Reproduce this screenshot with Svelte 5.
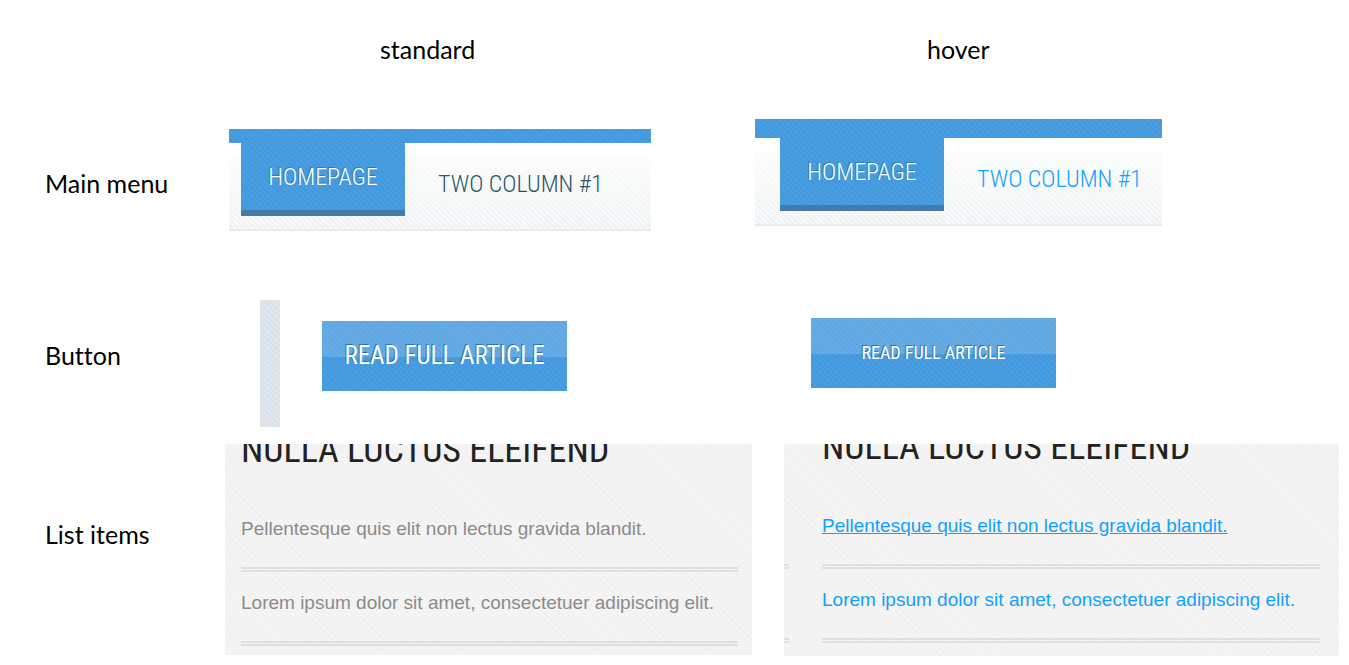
<script>
  const states = [
    { name: 'standard', hover: false },
    { name: 'hover', hover: true }
  ];
  const items = [
    'Pellentesque quis elit non lectus gravida blandit.',
    'Lorem ipsum dolor sit amet, consectetuer adipiscing elit.'
  ];
</script>

<main class="sheet">
  <span></span>
  {#each states as state}
    <h2 class="state" class:hover={state.hover}>{state.name}</h2>
  {/each}

  <h3 class="label">Main menu</h3>
  {#each states as state}
    <nav class="menu" class:hover={state.hover}>
      <div class="bar"></div>
      <div class="links">
        <a class="tab" href="#home">HOMEPAGE</a>
        <a class="plain" href="#two">TWO COLUMN #1</a>
      </div>
    </nav>
  {/each}

  <h3 class="label">Button</h3>
  {#each states as state}
    <div class="action" class:hover={state.hover}>
      {#if !state.hover}<div class="strip"></div>{/if}
      <button type="button">READ FULL ARTICLE</button>
    </div>
  {/each}

  <h3 class="label last">List items</h3>
  {#each states as state}
    <section class="panel" class:hover={state.hover}>
      {#if state.hover}
        <div class="stubs"><i></i><i></i></div>
      {/if}
      <div class="body">
        <h4>NULLA LUCTUS ELEIFEND</h4>
        <ul>
          {#each items as item}
            <li><a href="#item">{item}</a></li>
          {/each}
        </ul>
      </div>
    </section>
  {/each}
</main>

<style>
  :global(body) {
    background: #fff;
  }
  .sheet {
    --stripes: repeating-linear-gradient(45deg, rgba(255, 255, 255, 0.05) 0 2px, rgba(255, 255, 255, 0) 3px 4px);
    --narrow: 'Roboto Condensed', 'Open Sans Condensed', 'Liberation Sans', sans-serif;
    display: grid;
    grid-template-columns: 225px 530fr 594fr;
    grid-template-rows: 98px 172px 174px auto;
    align-items: start;
    font-family: 'Liberation Sans', sans-serif;
  }
  h2, h3, h4, ul {
    margin: 0;
    padding: 0;
    font-weight: 400;
  }
  a {
    text-decoration: none;
  }
  .state, .label {
    font: 400 25px/32px Lato, sans-serif;
    font-variant-ligatures: none;
    color: #000;
  }
  .state {
    padding: 33px 0 0 155px;
  }
  .state.hover {
    padding-left: 172px;
  }
  .label {
    padding: 69px 0 0 45px;
  }
  .label.last {
    padding-top: 74px;
  }

  .menu {
    width: 422px;
    max-width: 100%;
    margin: 31px 0 0 4px;
    font-family: var(--narrow);
    font-size: 24px;
    font-weight: 300;
  }
  .menu.hover {
    width: 407px;
    margin: 21px 0 0;
  }
  .bar {
    height: 14px;
    background: var(--stripes), #4098de;
  }
  .hover .bar {
    height: 19px;
  }
  .links {
    display: flex;
    align-items: flex-start;
    height: 86px;
    padding-left: 12px;
    border-bottom: 2px solid #ebebeb;
    background:
      linear-gradient(#fff 14px, rgba(255, 255, 255, 0) 15px),
      repeating-linear-gradient(45deg, rgba(255, 255, 255, 0.5) 0 2px, rgba(255, 255, 255, 0) 2px 4px),
      linear-gradient(#fafbfb 15px, #eef2f4);
  }
  .hover .links {
    padding-left: 25px;
  }
  .tab {
    box-sizing: border-box;
    flex: none;
    width: 164px;
    height: 73px;
    border-bottom: 6px solid #457ba8;
    background: var(--stripes), #4098de;
    color: #fff;
    line-height: 68px;
    text-align: center;
    text-shadow: -1px -1px 0 #2f7fae;
  }
  .plain {
    padding-left: 33px;
    color: #2b5666;
    line-height: 82px;
    white-space: nowrap;
  }
  .hover .plain {
    color: #12a0ff;
  }

  .action {
    display: flex;
    align-items: flex-start;
    gap: 42px;
    padding: 30px 0 0 35px;
  }
  .action.hover {
    padding-left: 56px;
  }
  .strip {
    width: 20px;
    height: 127px;
    background:
      repeating-linear-gradient(45deg, rgba(255, 255, 255, 0.2) 0 2px, rgba(255, 255, 255, 0) 3px 4px),
      #d8e0e8;
  }
  button {
    width: 245px;
    height: 70px;
    margin: 21px 0 0;
    padding: 0;
    border: 0;
    background: var(--stripes), linear-gradient(#5ea7e3 36px, #4098de 36px);
    color: #fff;
    font: 400 25px/70px var(--narrow);
    text-shadow: -1px -1px 0 #2a75ad;
  }
  .hover button {
    margin-top: 18px;
    font-size: 18px;
  }

  .panel {
    display: flex;
    margin-right: 3px;
    overflow: hidden;
    height: 211px;
    background:
      repeating-linear-gradient(45deg, rgba(255, 255, 255, 0.3) 0 2px, rgba(255, 255, 255, 0.05) 3px 4px),
      #f0f0f0;
  }
  .panel.hover {
    margin: 0 10px 0 29px;
    height: 212px;
  }
  .body {
    flex: 1;
    padding: 0 14px 0 16px;
  }
  .hover .body {
    padding: 0 19px 0 33px;
  }
  h4 {
    height: 48px;
    margin-top: -20px;
    color: #222;
    font: 400 36px/52px var(--narrow);
    white-space: nowrap;
  }
  .hover h4 {
    margin-top: -23px;
  }
  ul {
    list-style: none;
    padding-top: 26px;
  }
  li {
    height: 69px;
    border-bottom: 5px double #e0e0e0;
    font-size: 19px;
    line-height: 62px;
    white-space: nowrap;
  }
  li a {
    color: #8b8b8b;
  }
  .hover li a {
    color: #12a0ff;
  }
  .hover li:first-child a {
    text-decoration: underline;
  }
  .stubs {
    width: 5px;
    padding-top: 51px;
  }
  .stubs i {
    display: block;
    height: 69px;
    border-bottom: 5px double #e0e0e0;
  }
</style>
